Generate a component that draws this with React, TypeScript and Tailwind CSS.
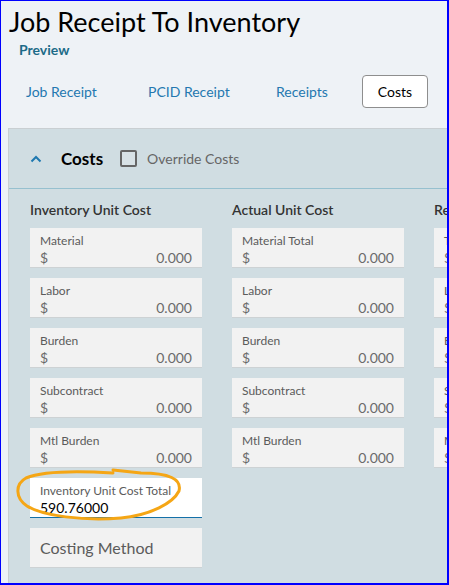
import React from 'react';

const font = { fontFamily: '"Source Sans Pro", Lato, "Liberation Sans", sans-serif' };

const CostField: React.FC<{ label: string; value?: string }> = ({ label, value = '0.000' }) => (
  <div className="h-[40px] bg-[#f2f2f2] border-b border-[#cdd2d4] px-[10px] pt-[5px] flex flex-col">
    <span className="text-[12px] leading-[16px] text-[#5b5b5b] whitespace-nowrap">{label}</span>
    <div className="flex justify-between text-[14px] leading-[18px] text-[#6a6a6a]">
      <span>$</span>
      <span>{value}</span>
    </div>
  </div>
);

const columns = [
  {
    title: 'Inventory Unit Cost',
    fields: ['Material', 'Labor', 'Burden', 'Subcontract', 'Mtl Burden'],
  },
  {
    title: 'Actual Unit Cost',
    fields: ['Material Total', 'Labor', 'Burden', 'Subcontract', 'Mtl Burden'],
  },
  {
    title: 'Received Unit Cost',
    fields: ['Total Material', 'Labor', 'Burden', 'Subcontract', 'Mtl Burden'],
  },
];

export default function App() {
  return (
    <div
      className="relative w-[449px] h-[585px] overflow-hidden bg-[#eef2f6] border-l border-t border-r-2 border-b-2 border-[#0000ff] flex flex-col"
      style={font}
    >
      <header className="pl-[8px] pt-[3px]">
        <h1 className="text-[27px] leading-[36px] text-black">Job Receipt To Inventory</h1>
        <div className="pl-[10px] mt-[1px] text-[14px] leading-[18px] font-bold text-[#1c6b88]">Preview</div>
      </header>

      <nav className="flex items-center mt-[16px] pl-[25px] text-[14px] text-[#2478b0]">
        <span className="w-[122px]">Job Receipt</span>
        <span className="w-[128px]">PCID Receipt</span>
        <span className="w-[86px]">Receipts</span>
        <button className="w-[66px] h-[33px] bg-white border border-[#8e8e8e] rounded-[4px] text-black">Costs</button>
      </nav>

      <section className="flex-1 ml-[7px] mt-[20px] bg-[#d0dde2] border-l border-t border-[#c9cfd2]">
        <div className="h-[60px] flex items-center pl-[21px] border-b border-[#96c0cf]">
          <svg width="12" height="8" viewBox="0 0 12 8" className="mr-[19px]">
            <path d="M1.5 6.5 L6 2 L10.5 6.5" fill="none" stroke="#1f78b0" strokeWidth="2" />
          </svg>
          <span className="text-[17px] font-bold text-black">Costs</span>
          <span className="ml-[17px] w-[17px] h-[17px] border-2 border-[#666] rounded-[2px] bg-[#d8e2e6]" />
          <span className="ml-[10px] text-[14px] text-[#666]">Override Costs</span>
        </div>

        <div className="flex gap-[30px] pl-[21px] pt-[11px]">
          {columns.map((col, i) => (
            <div key={col.title} className="w-[172px] shrink-0 flex flex-col">
              <div className="h-[28px] text-[14px] leading-[20px] font-semibold text-[#333] whitespace-nowrap">{col.title}</div>
              <div className="flex flex-col gap-[10px]">
                {col.fields.map((f) => (
                  <CostField key={f} label={f} />
                ))}
                {i === 0 && (
                  <>
                    <div className="h-[40px] bg-white border-b border-[#1470a8] px-[10px] pt-[5px] flex flex-col">
                      <span className="text-[12px] leading-[16px] text-[#5b5b5b] whitespace-nowrap">Inventory Unit Cost Total</span>
                      <span className="text-[14px] leading-[18px] text-black">590.76000</span>
                    </div>
                    <div className="h-[40px] bg-[#f2f2f2] border-b border-[#cdd2d4] px-[10px] flex items-center">
                      <span className="text-[16px] text-[#5b5b5b]">Costing Method</span>
                    </div>
                  </>
                )}
              </div>
            </div>
          ))}
        </div>
      </section>

      <svg className="absolute left-0 top-0 pointer-events-none" width="449" height="585">
        <path
          d="M112 472 C80 470, 42 470, 25 477 C14 483, 14 497, 26 505 C42 515, 82 520, 120 517 C150 514, 172 502, 178 490 C181 478, 168 472, 140 472 L112 469"
          fill="none"
          stroke="#f5a615"
          strokeWidth="3"
          strokeLinecap="round"
        />
      </svg>
    </div>
  );
}
